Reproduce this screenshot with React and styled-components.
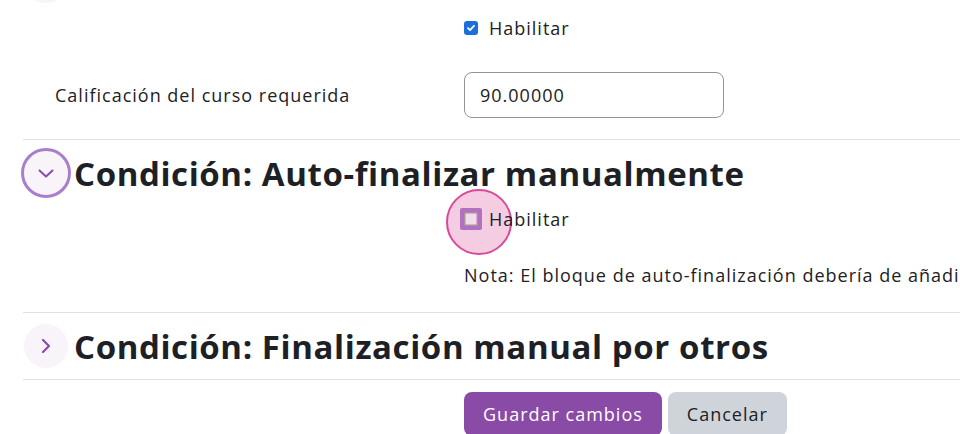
import React from "react";
import styled, { createGlobalStyle } from "styled-components";

const GlobalStyle = createGlobalStyle`
	html, body {
		margin: 0;
		padding: 0;
		background: #fff;
		overflow: hidden;
	}
	body {
		font-family: "Open Sans", "DejaVu Sans", sans-serif;
		color: #1d2125;
	}
`

function ChevronDown() {
	return (
		<svg width="20" height="20" viewBox="0 0 20 20" fill="none">
			<path d="M3.5 7.5l6.5 6 6.5-6" stroke="#8a4ba6" strokeWidth="2" strokeLinecap="round" strokeLinejoin="round" />
		</svg>
	)
}

function ChevronRight() {
	return (
		<svg width="20" height="20" viewBox="0 0 20 20" fill="none">
			<path d="M7 4l6 6-6 6" stroke="#8a4ba6" strokeWidth="2.2" strokeLinecap="round" strokeLinejoin="round" />
		</svg>
	)
}

function App() {
	return (
		<>
			<GlobalStyle />
			<Page>
				<PrevToggle />
				<Row height={56}>
					<Label />
					<Field>
						<CheckLabel>
							<CheckedBox>
								<svg width="10" height="10" viewBox="0 0 10 10" fill="none">
									<path d="M2 5.2l2 2 4-4.4" stroke="#fff" strokeWidth="1.8" strokeLinecap="round" strokeLinejoin="round" />
								</svg>
							</CheckedBox>
							Habilitar
						</CheckLabel>
					</Field>
				</Row>
				<Row height={78}>
					<Label>Calificación del curso requerida</Label>
					<Field>
						<Input>90.00000</Input>
					</Field>
				</Row>
				<Spacer height={5} />
				<Section>
					<Header>
						<Toggle open>
							<ChevronDown />
						</Toggle>
						<Title>Condición: Auto-finalizar manualmente</Title>
					</Header>
					<Row height={26}>
						<Label />
						<Field>
							<CheckLabel focused>
								<FocusBox>
									<Ring />
									<EmptyBox />
								</FocusBox>
								Habilitar
							</CheckLabel>
						</Field>
					</Row>
					<NoteRow>
						<Label />
						<Field>
							<Note>Nota: El bloque de auto-finalización debería de añadirse al curso para permitir que los estudiantes marquen el curso como finalizado.</Note>
						</Field>
					</NoteRow>
				</Section>
				<Section>
					<Header>
						<Toggle>
							<ChevronRight />
						</Toggle>
						<Title>Condición: Finalización manual por otros</Title>
					</Header>
				</Section>
				<Actions>
					<Label />
					<Buttons>
						<Button primary>Guardar cambios</Button>
						<Button>Cancelar</Button>
					</Buttons>
				</Actions>
			</Page>
		</>
	)
}

const Page = styled.div`
	position: relative;
	z-index: 0;
	width: 960px;
	height: 434px;
	overflow: hidden;
	padding-left: 23px;
	box-sizing: border-box;
	letter-spacing: 1px;
`

const PrevToggle = styled.div`
	position: absolute;
	left: 24px;
	top: -41px;
	width: 44px;
	height: 44px;
	border-radius: 50%;
	background: #f8f4fa;
`

const Row = styled.div`
	display: flex;
	align-items: center;
	height: ${props => props.height}px;
`

const NoteRow = styled.div`
	display: flex;
	align-items: flex-start;
	height: 80px;
	padding-top: 31px;
	box-sizing: border-box;
`

const Spacer = styled.div`
	height: ${props => props.height}px;
	border-bottom: 1px solid #dee2e6;
`

const Label = styled.div`
	flex-shrink: 0;
	width: 441px;
	padding-left: 32px;
	box-sizing: border-box;
	font-size: 18px;
	color: #1d2125;
`

const Field = styled.div`
	flex: 1;
	min-width: 0;
	white-space: nowrap;
`

const CheckLabel = styled.label`
	display: flex;
	align-items: center;
	gap: ${props => props.focused ? 7 : 11}px;
	font-size: 18px;
	color: #1d2125;
`

const CheckedBox = styled.span`
	display: inline-flex;
	align-items: center;
	justify-content: center;
	width: 14px;
	height: 14px;
	border-radius: 3px;
	background: #1a6fd9;
`

const FocusBox = styled.span`
	position: relative;
	display: inline-flex;
	flex-shrink: 0;
	width: 22px;
	height: 22px;
	margin-left: -4px;
`

const Ring = styled.span`
	position: absolute;
	left: -14px;
	top: -19px;
	width: 66px;
	height: 66px;
	box-sizing: border-box;
	z-index: -1;
	border-radius: 50%;
	background: #f4cde2;
	border: 2px solid #d9499a;
`

const EmptyBox = styled.span`
	position: relative;
	width: 22px;
	height: 22px;
	box-sizing: border-box;
	border: 4px solid #b470c0;
	background: #f3dcea;
	box-shadow: inset 0 0 0 1.5px #a9919f;
	border-radius: 2px;
`

const Input = styled.div`
	width: 260px;
	height: 46px;
	box-sizing: border-box;
	border: 1px solid #8f959e;
	border-radius: 8px;
	padding: 0 15px;
	display: flex;
	align-items: center;
	font-size: 18px;
	color: #1d2125;
`

const Section = styled.section`
	border-bottom: 1px solid #dee2e6;
`

const Header = styled.div`
	display: flex;
	align-items: center;
	height: 66px;
`

const Toggle = styled.span`
	display: flex;
	flex-shrink: 0;
	align-items: center;
	justify-content: center;
	width: ${props => props.open ? 50 : 44}px;
	height: ${props => props.open ? 50 : 44}px;
	margin: ${props => props.open ? '0 3px 0 -2px' : '0 6px 0 1px'};
	box-sizing: border-box;
	border-radius: 50%;
	background: #f8f4fa;
	border: ${props => props.open ? '3px solid #a97fcd' : '0'};
`

const Title = styled.h3`
	margin: 0;
	font-size: 33px;
	font-weight: 700;
	letter-spacing: 0.6px;
	color: #1d2125;
	white-space: nowrap;
`

const Note = styled.div`
	font-size: 18px;
	color: #1d2125;
`

const Actions = styled.div`
	display: flex;
	padding-top: 12px;
`

const Buttons = styled.div`
	display: flex;
	gap: 6px;
`

const Button = styled.button`
	height: 44px;
	padding: 0 19px;
	border: 0;
	border-radius: 8px;
	font-family: inherit;
	font-size: 18px;
	letter-spacing: 1px;
	background: ${props => props.primary ? '#8a4ba6' : '#ced4da'};
	color: ${props => props.primary ? '#fff' : '#1d2125'};
`

export default App
